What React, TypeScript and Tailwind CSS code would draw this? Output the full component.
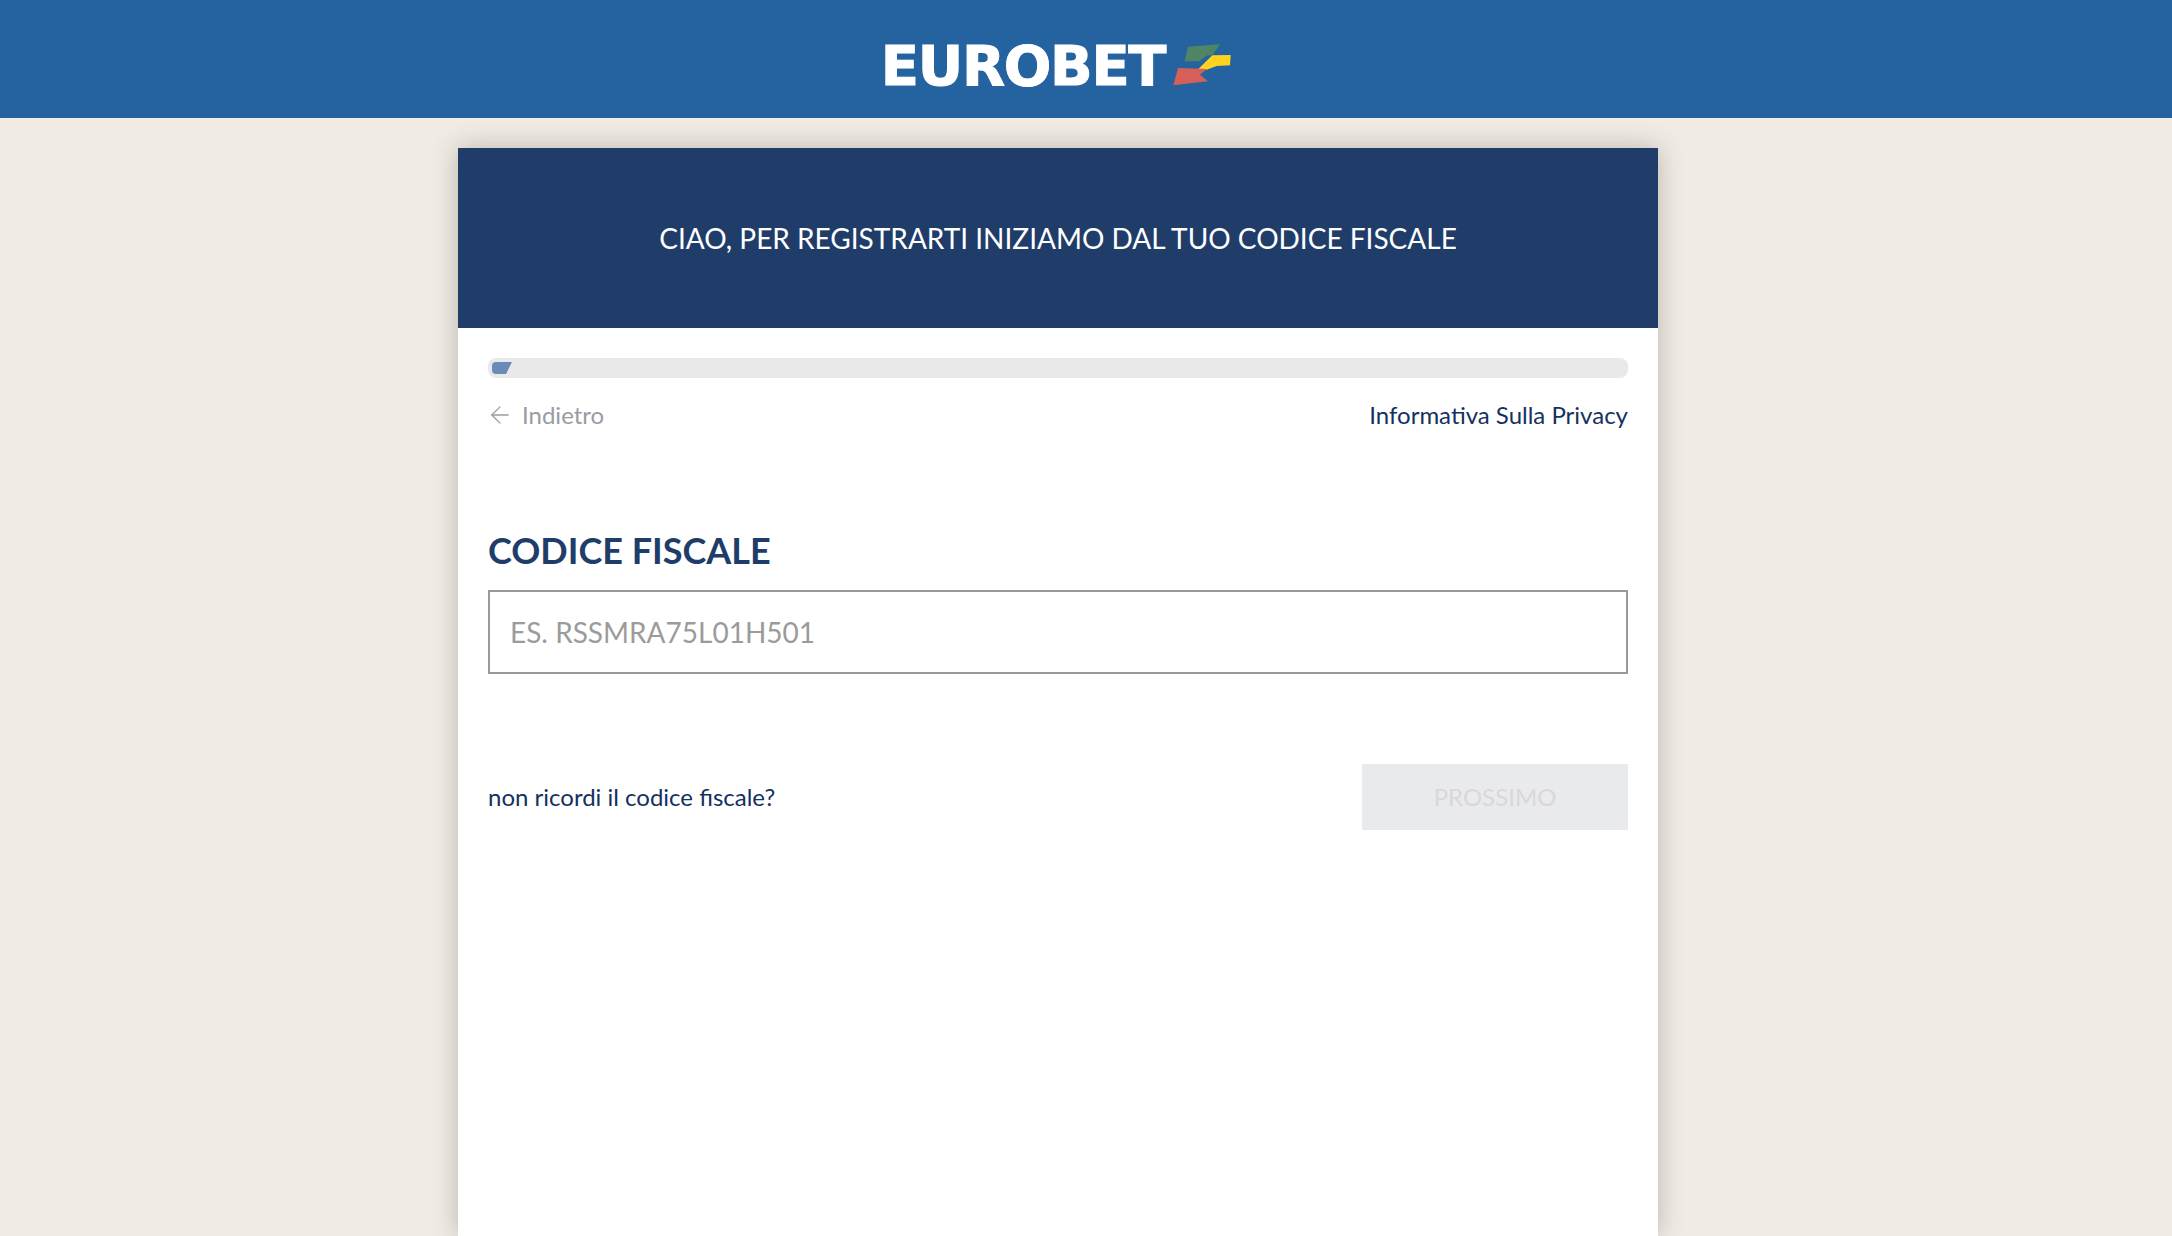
import React from "react";
import { ArrowLeft } from "lucide-react";

function Logo() {
  return (
    <div className="flex items-center">
      <span className="font-['DejaVu_Sans',sans-serif] text-[56px] font-bold leading-none tracking-[-1.3px] text-white [-webkit-text-stroke:1px_white]">
        EUROBET
      </span>
      <svg width="62" height="45" viewBox="0 0 186 135" className="ml-[8px]">
        <polygon points="45,8 141,1 118,34 103,34 78,52 35,52" fill="#4f8464" />
        <polygon points="118,34 173,33 171,64 131,66 101,77 73,78" fill="#ffd21e" />
        <polygon points="15,72 101,75 81,92 105,112 1,124" fill="#d65f59" />
      </svg>
    </div>
  );
}

export default function App() {
  return (
    <div className="h-[1236px] overflow-hidden bg-[#f0ebe4] font-['Lato',sans-serif]">
      {/* Top bar */}
      <header className="flex h-[118px] items-center justify-center bg-[#2563a0] pr-[56px] pt-[14px]">
        <Logo />
      </header>

      {/* Card */}
      <main className="ml-[458px] mt-[30px] h-[1088px] w-[1200px] bg-white shadow-[0_0_24px_rgba(60,60,50,0.3)]">
        <div className="flex h-[180px] items-center justify-center bg-[#203d6a]">
          <h1 className="text-[28px] font-normal text-white">
            CIAO, PER REGISTRARTI INIZIAMO DAL TUO CODICE FISCALE
          </h1>
        </div>

        <div className="px-[30px] pt-[30px]">
          {/* Progress */}
          <div className="flex h-[20px] items-center rounded-[8px] bg-[#e9e9ea] px-[4px]">
            <div className="h-[12px] w-[20px] rounded-l-[4px] bg-[#6a8bb8] [clip-path:polygon(0_0,100%_0,70%_100%,0_100%)]" />
          </div>

          <div className="mt-[22px] flex h-[30px] items-center justify-between text-[24px]">
            <a className="flex items-center text-[#999ca1]">
              <ArrowLeft size={28} strokeWidth={1.1} className="ml-[-2px] mr-[8px]" />
              Indietro
            </a>
            <a className="text-[#14315f]">Informativa Sulla Privacy</a>
          </div>

          <h2 className="mt-[102px] text-[36px] font-bold leading-none text-[#203d6a]">CODICE FISCALE</h2>

          <input
            placeholder="ES. RSSMRA75L01H501"
            className="mt-[22px] block h-[84px] w-full border-2 border-[#999999] bg-white px-[20px] text-[28px] outline-none placeholder:text-[#9b9b9b]"
          />

          <div className="mt-[90px] flex items-center justify-between">
            <a className="text-[24px] text-[#14315f]">non ricordi il codice fiscale?</a>
            <button className="h-[66px] w-[266px] bg-[#e9eaee] text-[24px] text-[#d9d8d4]">PROSSIMO</button>
          </div>
        </div>
      </main>
    </div>
  );
}
